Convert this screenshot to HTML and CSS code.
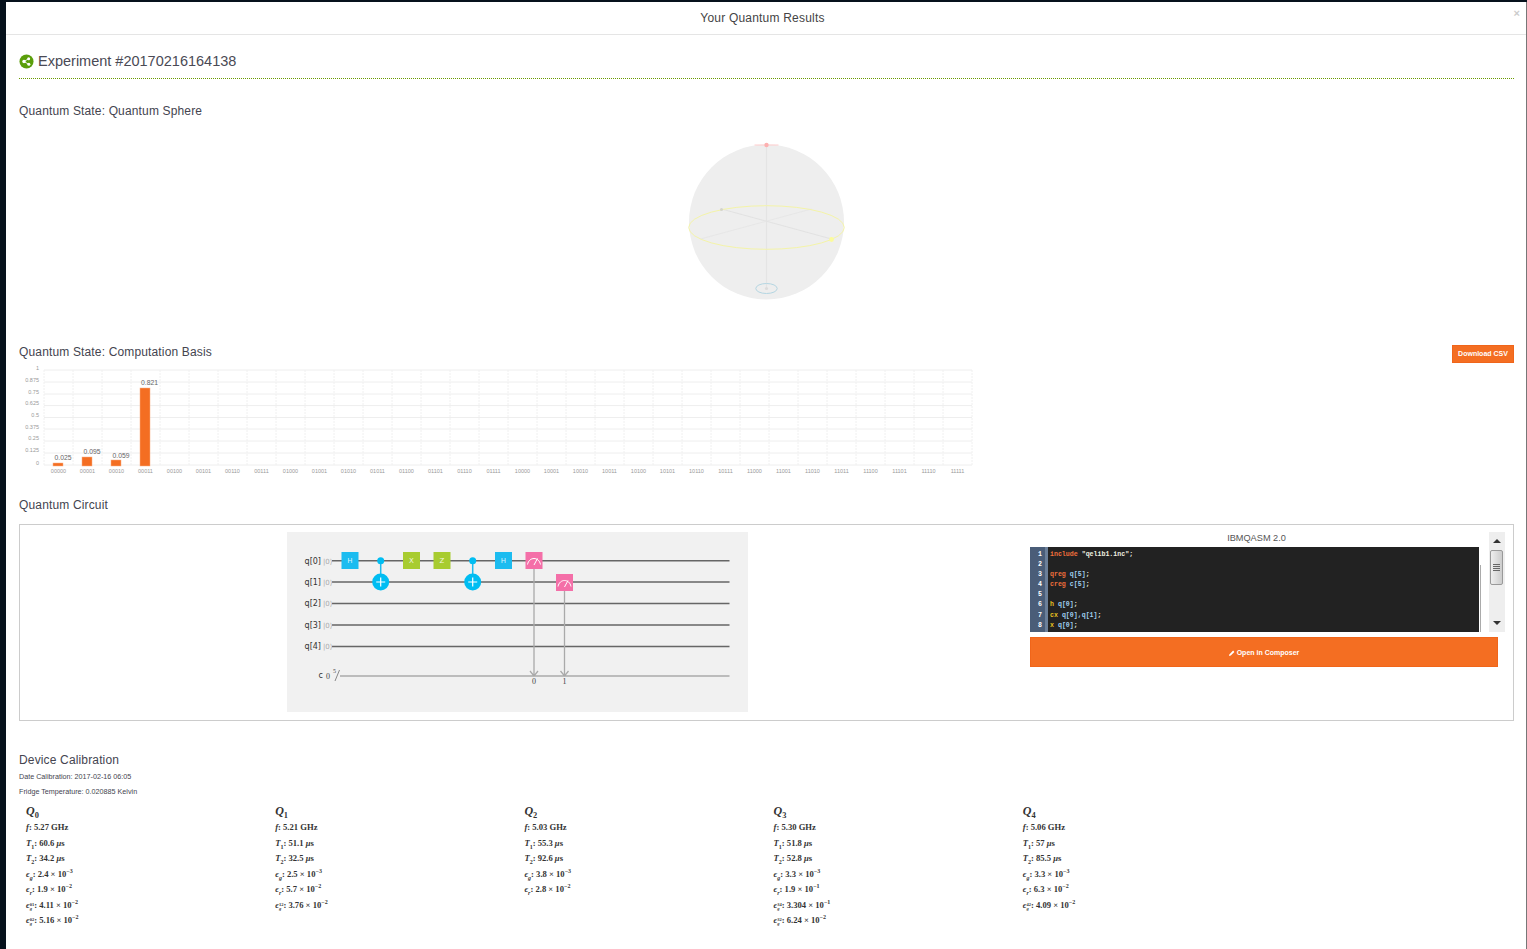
FILE: index.html
```html
<!DOCTYPE html>
<html lang="en">
<head>
  <meta charset="UTF-8">
  <title>Your Quantum Results</title>
  <link rel="stylesheet" href="styles.css">
</head>
<body>
  <div class="modal">
    <div class="modal-header">
      <span class="modal-title">Your Quantum Results</span>
      <span class="modal-close">&times;</span>
    </div>
    <div class="modal-body">
      <h1 class="experiment-title">
        <svg class="experiment-icon" viewBox="0 0 16 16">
          <circle cx="8" cy="8" r="7.5" fill="#5a9e0a"/>
          <path d="M5.300 8 10.300 5M5.300 8 10.500 11" stroke="#fff" stroke-width="0.9" fill="none"/>
          <circle cx="5.300" cy="8" r="1.800" fill="#fff"/>
          <circle cx="10.300" cy="5" r="1.600" fill="#fff"/>
          <circle cx="10.500" cy="11" r="1.600" fill="#fff"/>
        </svg>
        Experiment #20170216164138
      </h1>

      <h2 class="section-title first">Quantum State: Quantum Sphere</h2>
      <svg class="sphere" viewBox="666.500 125 200 190">
        <circle cx="766" cy="222" r="77.5" fill="#eee"/>
        <path d="M766 145V288" stroke="#e4e4e4" stroke-width="1.2"/>
        <path d="M721 209 831 239" stroke="#dedede" stroke-width="0.8"/>
        <path d="M700 239 811 209" stroke="#e4e4e4" stroke-width="0.8"/>
        <ellipse cx="766" cy="227.5" rx="77.8" ry="21.8" fill="none" stroke="#f4f4a8" stroke-width="1"/>
        <path d="M754 145H778" stroke="#fcc" stroke-width="1"/>
        <circle cx="766" cy="145" r="2.2" fill="#fdb0b0"/>
        <circle cx="831" cy="239.5" r="2.4" fill="#fbfb9c"/>
        <circle cx="721" cy="209.5" r="1.5" fill="#d4d4cc"/>
        <ellipse cx="766" cy="288.5" rx="10.7" ry="5" fill="none" stroke="#b4d6e2" stroke-width="1"/>
        <circle cx="766" cy="288.5" r="1.6" fill="#dcdcdc"/>
      </svg>

      <div class="section-row">
        <h2 class="section-title">Quantum State: Computation Basis</h2>
        <button class="btn-csv">Download CSV</button>
      </div>
      <svg class="chart" viewBox="19 363 960 115">
        <path class="grid" d="M44 370H972M44 382H972M44 394H972M44 405.6H972M44 417.5H972M44 429H972M44 441H972M44 453H972M44 465H972"/>
        <path class="grid-v" d="M44 370V465M73 370V465M102 370V465M131 370V465M160 370V465M189 370V465M218 370V465M247 370V465M276 370V465M305 370V465M334 370V465M363 370V465M392 370V465M421 370V465M450 370V465M479 370V465M508 370V465M537 370V465M566 370V465M595 370V465M624 370V465M653 370V465M682 370V465M711 370V465M740 370V465M769 370V465M798 370V465M827 370V465M856 370V465M885 370V465M914 370V465M943 370V465M972 370V465"/>
        <g class="y-labels">
          <text x="39" y="370">1</text>
          <text x="39" y="382">0.875</text>
          <text x="39" y="394">0.75</text>
          <text x="39" y="405">0.625</text>
          <text x="39" y="417">0.5</text>
          <text x="39" y="429">0.375</text>
          <text x="39" y="440">0.25</text>
          <text x="39" y="452">0.125</text>
          <text x="39" y="465">0</text>
        </g>
        <g class="bars">
          <rect x="53" y="463" width="10" height="3"/>
          <rect x="82" y="457" width="10" height="9"/>
          <rect x="111" y="460" width="10" height="6"/>
          <rect x="140" y="388" width="10" height="78"/>
        </g>
        <g class="bar-values">
          <text x="63" y="460">0.025</text>
          <text x="92" y="454">0.095</text>
          <text x="121" y="458">0.059</text>
          <text x="149.500" y="385">0.821</text>
        </g>
        <g class="x-labels">
          <text x="58.5" y="472.500">00000</text><text x="87.5" y="472.500">00001</text><text x="116.5" y="472.500">00010</text><text x="145.5" y="472.500">00011</text>
          <text x="174.5" y="472.500">00100</text><text x="203.5" y="472.500">00101</text><text x="232.5" y="472.500">00110</text><text x="261.5" y="472.500">00111</text>
          <text x="290.5" y="472.500">01000</text><text x="319.5" y="472.500">01001</text><text x="348.5" y="472.500">01010</text><text x="377.5" y="472.500">01011</text>
          <text x="406.5" y="472.500">01100</text><text x="435.5" y="472.500">01101</text><text x="464.5" y="472.500">01110</text><text x="493.5" y="472.500">01111</text>
          <text x="522.5" y="472.500">10000</text><text x="551.5" y="472.500">10001</text><text x="580.5" y="472.500">10010</text><text x="609.5" y="472.500">10011</text>
          <text x="638.5" y="472.500">10100</text><text x="667.5" y="472.500">10101</text><text x="696.5" y="472.500">10110</text><text x="725.5" y="472.500">10111</text>
          <text x="754.5" y="472.500">11000</text><text x="783.5" y="472.500">11001</text><text x="812.5" y="472.500">11010</text><text x="841.5" y="472.500">11011</text>
          <text x="870.5" y="472.500">11100</text><text x="899.5" y="472.500">11101</text><text x="928.5" y="472.500">11110</text><text x="957.5" y="472.500">11111</text>
        </g>
      </svg>

      <h2 class="section-title circuit-title">Quantum Circuit</h2>
      <div class="circuit-box">
        <div class="circuit-col">
          <svg class="circuit" viewBox="287 532 461 180">
            <rect x="287" y="532" width="461" height="180" fill="#f1f1f1"/>
            <path class="wire" d="M332 560.700H729.500M332 582H729.500M332 603.500H729.500M332 625H729.500M332 646.500H729.500"/>
            <path class="cwire" d="M340 676H729.500M534 569V676M564.500 591V676M530 671 534 676 538 671M560.500 671 564.500 676 568.500 671"/>
            <path class="cslash" d="M335 681 339.500 670"/>

            <g class="qlabels">
              <text x="321" y="563.500">q[0]</text>
              <text x="321" y="584.500">q[1]</text>
              <text x="321" y="606">q[2]</text>
              <text x="321" y="627.500">q[3]</text>
              <text x="321" y="649">q[4]</text>
              <text x="323" y="677.500">c</text>
            </g>
            <g class="kets">
              <text x="323" y="563.500">|0⟩</text>
              <text x="323" y="584.500">|0⟩</text>
              <text x="323" y="606">|0⟩</text>
              <text x="323" y="627.500">|0⟩</text>
              <text x="323" y="649">|0⟩</text>
            </g>
            <text class="cnum" x="326" y="679">0</text>
            <text class="cnum small" x="333" y="673">5</text>
            <text class="cnum" x="534" y="683.500" text-anchor="middle">0</text>
            <text class="cnum" x="564.500" y="683.500" text-anchor="middle">1</text>

            <rect class="gate-h" x="341.500" y="552" width="17" height="17"/>
            <rect class="gate-h" x="495" y="552" width="17" height="17"/>
            <rect class="gate-p" x="403" y="552" width="17" height="17"/>
            <rect class="gate-p" x="433.500" y="552" width="17" height="17"/>
            <g class="gate-text">
              <text x="350" y="563">H</text>
              <text x="411.500" y="563">X</text>
              <text x="442" y="563">Z</text>
              <text x="503.500" y="563">H</text>
            </g>

            <g class="cnot">
              <path d="M380.700 560.700V582M472.700 560.700V582"/>
              <circle cx="380.700" cy="560.700" r="3.500"/>
              <circle cx="380.700" cy="582" r="8.500"/>
              <circle cx="472.700" cy="560.700" r="3.500"/>
              <circle cx="472.700" cy="582" r="8.500"/>
            </g>
            <path class="plus" d="M376.200 582H385.200M380.700 577.500V586.500M468.200 582H477.200M472.700 577.500V586.500"/>

            <rect class="gate-m" x="525.500" y="552" width="17" height="17"/>
            <rect class="gate-m" x="556" y="574" width="17" height="17"/>
            <path class="meter" d="M527.500 564.500C529 556.500 539 556.500 540.500 564.500M534 565 537.500 558.500M558 586.500C559.500 578.500 569.500 578.500 571 586.500M564.500 587 568 580.500"/>
          </svg>
        </div>
        <div class="code-col">
          <div class="code-row">
            <div class="code-pane">
              <div class="code-title">IBMQASM 2.0</div>
              <div class="code-wrap">
                <div class="editor">
                  <div class="gutter">
                    <div>1</div><div>2</div><div>3</div><div>4</div><div>5</div><div>6</div><div>7</div><div>8</div>
                  </div>
                  <div class="code-lines">
                    <div><span class="k">include</span> <span class="s">"qelib1.inc"</span><span class="s">;</span></div>
                    <div>&nbsp;</div>
                    <div><span class="k">qreg</span> <span class="v">q[5]</span><span class="s">;</span></div>
                    <div><span class="k">creg</span> <span class="v">c[5]</span><span class="s">;</span></div>
                    <div>&nbsp;</div>
                    <div><span class="g">h</span> <span class="v">q[0]</span><span class="s">;</span></div>
                    <div><span class="g">cx</span> <span class="v">q[0],q[1]</span><span class="s">;</span></div>
                    <div><span class="g">x</span> <span class="v">q[0]</span><span class="s">;</span></div>
                  </div>
                </div>
                <div class="editor-track"></div>
              </div>
            </div>
            <div class="scrollbar">
              <span class="arrow up"></span>
              <div class="thumb">
                <span class="grip"></span><span class="grip"></span><span class="grip"></span><span class="grip"></span>
              </div>
              <span class="arrow down"></span>
            </div>
          </div>
          <button class="btn-composer">
            <svg class="pencil" viewBox="0 0 8 8"><path d="M0 8 .7 5.600 5.500 .8 7.200 2.500 2.400 7.300Z" fill="#fff"/></svg>
            Open in Composer
          </button>
        </div>
      </div>

      <h2 class="section-title calib-title">Device Calibration</h2>
      <p class="calib-meta">Date Calibration: 2017-02-16 06:05</p>
      <p class="calib-meta">Fridge Temperature: 0.020885 Kelvin</p>

      <div class="qubits">
        <div class="qubit">
          <div class="qubit-name"><i>Q</i><sub>0</sub></div>
          <div class="stat"><i>f</i>: 5.27 GHz</div>
          <div class="stat"><i>T</i><sub>1</sub>: 60.6 <i>μ</i>s</div>
          <div class="stat"><i>T</i><sub>2</sub>: 34.2 <i>μ</i>s</div>
          <div class="stat"><i>ϵ</i><sub><i>g</i></sub>: 2.4 × 10<sup>−3</sup></div>
          <div class="stat"><i>ϵ</i><sub><i>r</i></sub>: 1.9 × 10<sup>−2</sup></div>
          <div class="stat"><i>ϵ</i><span class="idx"><span>01</span><i>g</i></span>: 4.11 × 10<sup>−2</sup></div>
          <div class="stat"><i>ϵ</i><span class="idx"><span>02</span><i>g</i></span>: 5.16 × 10<sup>−2</sup></div>
        </div>
        <div class="qubit">
          <div class="qubit-name"><i>Q</i><sub>1</sub></div>
          <div class="stat"><i>f</i>: 5.21 GHz</div>
          <div class="stat"><i>T</i><sub>1</sub>: 51.1 <i>μ</i>s</div>
          <div class="stat"><i>T</i><sub>2</sub>: 32.5 <i>μ</i>s</div>
          <div class="stat"><i>ϵ</i><sub><i>g</i></sub>: 2.5 × 10<sup>−3</sup></div>
          <div class="stat"><i>ϵ</i><sub><i>r</i></sub>: 5.7 × 10<sup>−2</sup></div>
          <div class="stat"><i>ϵ</i><span class="idx"><span>12</span><i>g</i></span>: 3.76 × 10<sup>−2</sup></div>
        </div>
        <div class="qubit">
          <div class="qubit-name"><i>Q</i><sub>2</sub></div>
          <div class="stat"><i>f</i>: 5.03 GHz</div>
          <div class="stat"><i>T</i><sub>1</sub>: 55.3 <i>μ</i>s</div>
          <div class="stat"><i>T</i><sub>2</sub>: 92.6 <i>μ</i>s</div>
          <div class="stat"><i>ϵ</i><sub><i>g</i></sub>: 3.8 × 10<sup>−3</sup></div>
          <div class="stat"><i>ϵ</i><sub><i>r</i></sub>: 2.8 × 10<sup>−2</sup></div>
        </div>
        <div class="qubit">
          <div class="qubit-name"><i>Q</i><sub>3</sub></div>
          <div class="stat"><i>f</i>: 5.30 GHz</div>
          <div class="stat"><i>T</i><sub>1</sub>: 51.8 <i>μ</i>s</div>
          <div class="stat"><i>T</i><sub>2</sub>: 52.8 <i>μ</i>s</div>
          <div class="stat"><i>ϵ</i><sub><i>g</i></sub>: 3.3 × 10<sup>−3</sup></div>
          <div class="stat"><i>ϵ</i><sub><i>r</i></sub>: 1.9 × 10<sup>−1</sup></div>
          <div class="stat"><i>ϵ</i><span class="idx"><span>34</span><i>g</i></span>: 3.304 × 10<sup>−1</sup></div>
          <div class="stat"><i>ϵ</i><span class="idx"><span>32</span><i>g</i></span>: 6.24 × 10<sup>−2</sup></div>
        </div>
        <div class="qubit">
          <div class="qubit-name"><i>Q</i><sub>4</sub></div>
          <div class="stat"><i>f</i>: 5.06 GHz</div>
          <div class="stat"><i>T</i><sub>1</sub>: 57 <i>μ</i>s</div>
          <div class="stat"><i>T</i><sub>2</sub>: 85.5 <i>μ</i>s</div>
          <div class="stat"><i>ϵ</i><sub><i>g</i></sub>: 3.3 × 10<sup>−3</sup></div>
          <div class="stat"><i>ϵ</i><sub><i>r</i></sub>: 6.3 × 10<sup>−2</sup></div>
          <div class="stat"><i>ϵ</i><span class="idx"><span>42</span><i>g</i></span>: 4.09 × 10<sup>−2</sup></div>
        </div>
      </div>
    </div>
  </div>
</body>
</html>
```

FILE: styles.css
```css
html, body { height: 100%; margin: 0; overflow: hidden; }
body { background-color: #06111c; font-family: "Liberation Sans", Arial, sans-serif; color: #4a4a55; }
.modal { margin: 2px 0 0 6px; height: calc(100% - 2px); background-color: #fff; border-right: 1px solid #777; box-sizing: border-box; }

.modal-header { position: relative; height: 33px; box-sizing: border-box; padding-right: 7px; border-bottom: 1px solid #e5e5e5; text-align: center; line-height: 29px; }
.modal-title { font-size: 12px; letter-spacing: 0.2px; color: #444; }
.modal-close { position: absolute; right: 6px; top: -3px; font-size: 11px; font-weight: bold; color: #ccc; }

.modal-body { padding: 0 12px 0 13px; }
.experiment-title { display: flex; align-items: center; gap: 4px; margin: 16px 0 0; padding-bottom: 7px; height: 20px; line-height: 20px; font-size: 14.500px; font-weight: normal; border-bottom: 1px dotted #6a9a00; box-sizing: content-box; color: #4a4a55; }
.experiment-icon { width: 15px; height: 15px; flex: none; }

.section-title { margin: 0; font-size: 12px; font-weight: normal; line-height: 16px; letter-spacing: 0.15px; color: #44444f; }
.section-title.first { margin-top: 24px; }
.sphere { display: block; width: 200px; height: 190px; margin: 6px auto 0; }
.section-row { display: flex; justify-content: space-between; align-items: flex-start; margin-top: 29px; height: 19px; }
.btn-csv { margin-top: 1px; width: 62px; height: 18px; padding: 0 0 2px; border: 1px solid #f0651a; background-color: #f46e22; color: #fff; font-family: "Liberation Sans", Arial, sans-serif; font-size: 7px; font-weight: bold; }

.chart { display: block; width: 960px; height: 115px; }
.grid { fill: none; stroke: #eee; stroke-width: 1; }
.grid-v { fill: none; stroke: #f0f0f0; stroke-width: 1; stroke-dasharray: 2 1; }
.y-labels text { font-size: 5.5px; fill: #999; text-anchor: end; }
.x-labels text { font-size: 5.5px; fill: #999; text-anchor: middle; }
.bars rect { fill: #f46e22; stroke: #fbb084; stroke-width: 0.5; }
.bar-values text { font-size: 6.8px; fill: #666; text-anchor: middle; }

.circuit-title { margin-top: 19px; }
.circuit-box { display: flex; margin-top: 11px; height: 197px; box-sizing: border-box; border: 1px solid #ccc; padding-top: 7px; }
.circuit-col { width: 995px; display: flex; justify-content: center; flex: none; }
.circuit { display: block; width: 461px; height: 180px; }
.wire { fill: none; stroke: #666; stroke-width: 1.5; }
.cwire { fill: none; stroke: #aaa; stroke-width: 1.3; }
.cslash { fill: none; stroke: #888; stroke-width: 1; }
.qlabels text { font-family: "DejaVu Sans", sans-serif; font-size: 8px; fill: #333; text-anchor: end; }
.kets text { font-family: "DejaVu Sans", sans-serif; font-size: 7px; fill: #aaa; }
.cnum { font-family: "Liberation Serif", serif; font-size: 8px; fill: #444; }
.cnum.small { font-size: 6px; }
.gate-h { fill: #1cbcf0; }
.gate-p { fill: #a8cc30; }
.gate-m { fill: #f46fa8; }
.gate-text text { font-family: "DejaVu Sans", sans-serif; font-size: 7px; fill: #fff; fill-opacity: 0.85; text-anchor: middle; }
.cnot path { stroke: #1cbcf0; stroke-width: 1.5; fill: none; }
.cnot circle { fill: #00bdf2; }
.plus { stroke: #fff; stroke-width: 1.2; fill: none; }
.meter { stroke: #fff; stroke-width: 1; fill: none; }

.code-col { flex: 1; padding: 0 15px; min-width: 0; }
.code-row { display: flex; gap: 6px; margin-right: -7px; height: 100px; }
.code-pane { width: 453px; flex: none; }
.code-title { height: 15px; line-height: 12px; font-size: 9.200px; text-align: center; color: #555; }
.code-wrap { display: flex; height: 85px; }
.editor { display: flex; width: 449px; height: 85px; background-color: #222; overflow: hidden; font-family: "Liberation Mono", monospace; font-size: 6.600px; font-weight: bold; line-height: 10.100px; }
.gutter { width: 15px; box-sizing: border-box; padding: 3px 3px 0 0; background-color: #4a5d78; text-align: right; color: #fff; flex: none; }
.code-lines { flex: 1; padding: 3px 0 0 2px; border-left: 3px solid #6b7f99; }
.code-lines div { white-space: pre; }
.k { color: #f0703c; }
.s { color: #f0f0e0; }
.v { color: #a0d0f0; }
.g { color: #e8c020; }
.editor-track { width: 1px; margin: 18px 0 0 1px; background-color: #aaa; }
.scrollbar { position: relative; width: 16px; height: 100px; background-color: #eee; flex: none; }
.arrow { position: absolute; left: 4px; width: 0; height: 0; border-left: 4px solid transparent; border-right: 4px solid transparent; }
.arrow.up { top: 7px; border-bottom: 4px solid #333; }
.arrow.down { bottom: 7px; border-top: 4px solid #333; }
.thumb { position: absolute; top: 18px; left: 1px; width: 13px; height: 35px; box-sizing: border-box; border: 1px solid #999; border-radius: 2px; background: linear-gradient(to right, #eee, #ccc); display: flex; flex-direction: column; justify-content: center; align-items: center; gap: 1px; }
.grip { display: block; width: 7px; height: 1px; background-color: #666; }
.btn-composer { display: block; width: 100%; height: 30px; margin-top: 5px; padding: 0; border: 1px solid #f0651a; background-color: #f46e22; color: #fff; font-family: "Liberation Sans", Arial, sans-serif; font-size: 7px; font-weight: bold; }
.pencil { width: 6px; height: 6px; vertical-align: -1px; }

.calib-title { margin-top: 31px; margin-bottom: 1px; }
.calib-meta { margin: 0; height: 15px; line-height: 15px; font-size: 7.200px; color: #44444f; }
.qubits { display: grid; grid-template-columns: repeat(5, 249.200px); margin-top: 5px; padding-left: 7px; }
.qubit-name { height: 16px; line-height: 14px; font-family: "Liberation Serif", serif; font-size: 12px; font-weight: bold; color: #333; }
.stat { height: 15.500px; line-height: 15.500px; font-family: "Liberation Serif", serif; font-size: 8.600px; font-weight: bold; color: #333; white-space: nowrap; }
sub, sup { font-size: 70%; line-height: 0; }
.idx { display: inline-flex; flex-direction: column; height: 8px; vertical-align: 2px; font-size: 4.500px; line-height: 4px; }
```
